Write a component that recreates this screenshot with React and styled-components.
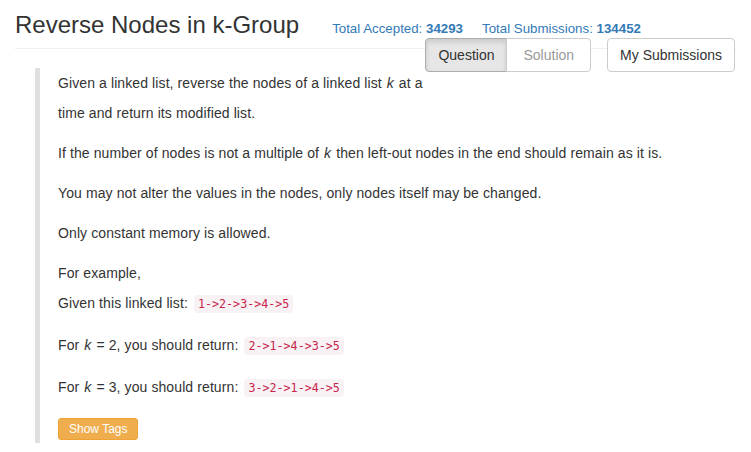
import React from "react";
import styled, { createGlobalStyle } from "styled-components";

const Global = createGlobalStyle`
  html, body { margin: 0; padding: 0; background: #fff; }
  body {
    font-family: "Liberation Sans", Arial, sans-serif;
    font-size: 14px;
    color: #333;
  }
`;

const Page = styled.div`
  padding: 0 15px;
`;

const Header = styled.div`
  display: flex;
  align-items: baseline;
  padding: 12px 0 10px;
  border-bottom: 1px solid #eee;
`;

const Title = styled.h3`
  margin: 0;
  font-size: 24px;
  line-height: 26px;
  font-weight: 400;
  color: #333;
`;

const Stats = styled.div`
  display: flex;
  gap: 19px;
  margin-left: 33px;
  font-size: 13.3px;
  color: #337ab7;
`;

const Stat = styled.span`
  b { font-weight: 700; }
`;

const Tabs = styled.div`
  float: right;
  display: flex;
  gap: 16px;
  margin: -11px 1px 0 0;
`;

const Group = styled.div`
  display: flex;
`;

const Btn = styled.button`
  font-family: "Liberation Sans", Arial, sans-serif;
  font-size: 14px;
  line-height: 20px;
  padding: 6px ${(p) => (p.$wide ? "16px" : "12px")};
  border: 1px solid #ccc;
  background: ${(p) => (p.$active ? "#e6e6e6" : "#fff")};
  border-color: ${(p) => (p.$active ? "#adadad" : "#ccc")};
  box-shadow: ${(p) => (p.$active ? "inset 0 3px 5px rgba(0,0,0,.125)" : "none")};
  color: ${(p) => (p.$muted ? "#999" : "#333")};
  border-radius: 4px;
  cursor: pointer;
  ${Group} > &:first-child { border-top-right-radius: 0; border-bottom-right-radius: 0; }
  ${Group} > &:last-child { border-top-left-radius: 0; border-bottom-left-radius: 0; margin-left: -1px; }
`;

const Quote = styled.blockquote`
  margin: 19px 0 0 20px;
  padding: 0 0 3px 18px;
  border-left: 5px solid #e0e0e0;
`;

const P = styled.p`
  margin: 0 0 ${(p) => (p.$code ? "11px" : "10px")};
  line-height: 30px;
  letter-spacing: 0.1px;
`;

const Em = styled.i`
  display: inline-block;
  padding: 0 1px;
`;

const Code = styled.code`
  font-family: "DejaVu Sans Mono", "Liberation Mono", monospace;
  font-size: 11.7px;
  letter-spacing: 0;
  padding: 2px 4px;
  color: #c7254e;
  background: #f9f2f4;
  border-radius: 4px;
  margin-left: 2px;
`;

const TagBtn = styled.button`
  display: block;
  margin-top: 15px;
  font-family: "Liberation Sans", Arial, sans-serif;
  font-size: 12px;
  line-height: 16px;
  padding: 2px 10px;
  color: #fff;
  background: #f0ad4e;
  border: 1px solid #eea236;
  border-radius: 3px;
`;

export default function App() {
  return (
    <>
      <Global />
      <Page>
        <Header>
          <Title>Reverse Nodes in k-Group</Title>
          <Stats>
            <Stat>Total Accepted: <b>34293</b></Stat>
            <Stat>Total Submissions: <b>134452</b></Stat>
          </Stats>
        </Header>
        <Tabs>
          <Group>
            <Btn $active>Question</Btn>
            <Btn $muted $wide>Solution</Btn>
          </Group>
          <Btn>My Submissions</Btn>
        </Tabs>
        <Quote>
          <P>
            <span>Given a linked list, reverse the nodes of a linked list </span>
            <Em>k</Em>
            <span> at a </span>
            <span>time and return its modified list.</span>
          </P>
          <P>If the number of nodes is not a multiple of <Em>k</Em> then left-out nodes in the end should remain as it is.</P>
          <P>You may not alter the values in the nodes, only nodes itself may be changed.</P>
          <P>Only constant memory is allowed.</P>
          <P $code>For example,<br />Given this linked list: <Code>1-&gt;2-&gt;3-&gt;4-&gt;5</Code></P>
          <P $code>For <Em>k</Em> = 2, you should return: <Code>2-&gt;1-&gt;4-&gt;3-&gt;5</Code></P>
          <P $code>For <Em>k</Em> = 3, you should return: <Code>3-&gt;2-&gt;1-&gt;4-&gt;5</Code></P>
          <TagBtn>Show Tags</TagBtn>
        </Quote>
      </Page>
    </>
  );
}
